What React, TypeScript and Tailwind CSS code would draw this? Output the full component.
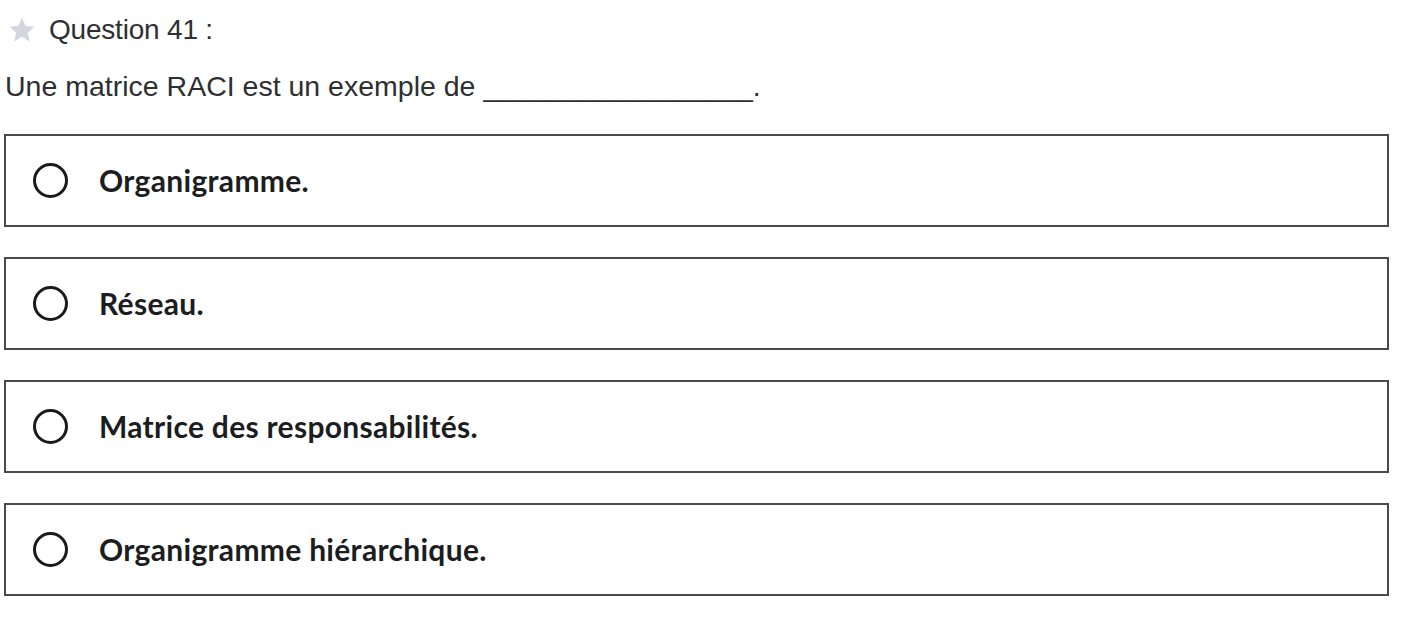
import React from "react";

const options = [
  "Organigramme.",
  "Réseau.",
  "Matrice des responsabilités.",
  "Organigramme hiérarchique.",
];

export default function App() {
  return (
    <div className="w-[1402px] h-[617px] bg-white overflow-hidden pl-[4px] pr-[13px] pt-[13px]" style={{ fontFamily: '"Liberation Sans", Arial, sans-serif' }}>
      <div className="flex items-center gap-[13px] pl-[4px] h-[34px]">
        <svg width="28" height="28" viewBox="0 0 24 24">
          <path d="M12 1.5l3.1 7.1 7.6.7-5.8 5 1.8 7.5L12 17.8l-6.7 4 1.8-7.5-5.8-5 7.6-.7z" fill="#d3d6de" />
        </svg>
        <span className="text-[28px] text-[#2d2f31] tracking-[-0.2px]">Question 41 :</span>
      </div>
      <div className="mt-[22px] text-[28.5px] text-[#2d2f31] leading-[34px] pl-[1px]">
        Une matrice RACI est un exemple de _________________.
      </div>
      <div className="mt-[31px] flex flex-col gap-[30px]">
        {options.map((o) => (
          <div key={o} className="h-[93px] border-2 border-[#4a4a4a] flex items-center pl-[27px]">
            <div className="w-[35px] h-[35px] rounded-full border-[3px] border-[#1a1a1a] shrink-0" />
            <span className="ml-[31px] text-[30px] font-bold text-[#1c1d1f] tracking-[0.3px]" style={{ fontFamily: 'Lato, sans-serif' }}>{o}</span>
          </div>
        ))}
      </div>
    </div>
  );
}
